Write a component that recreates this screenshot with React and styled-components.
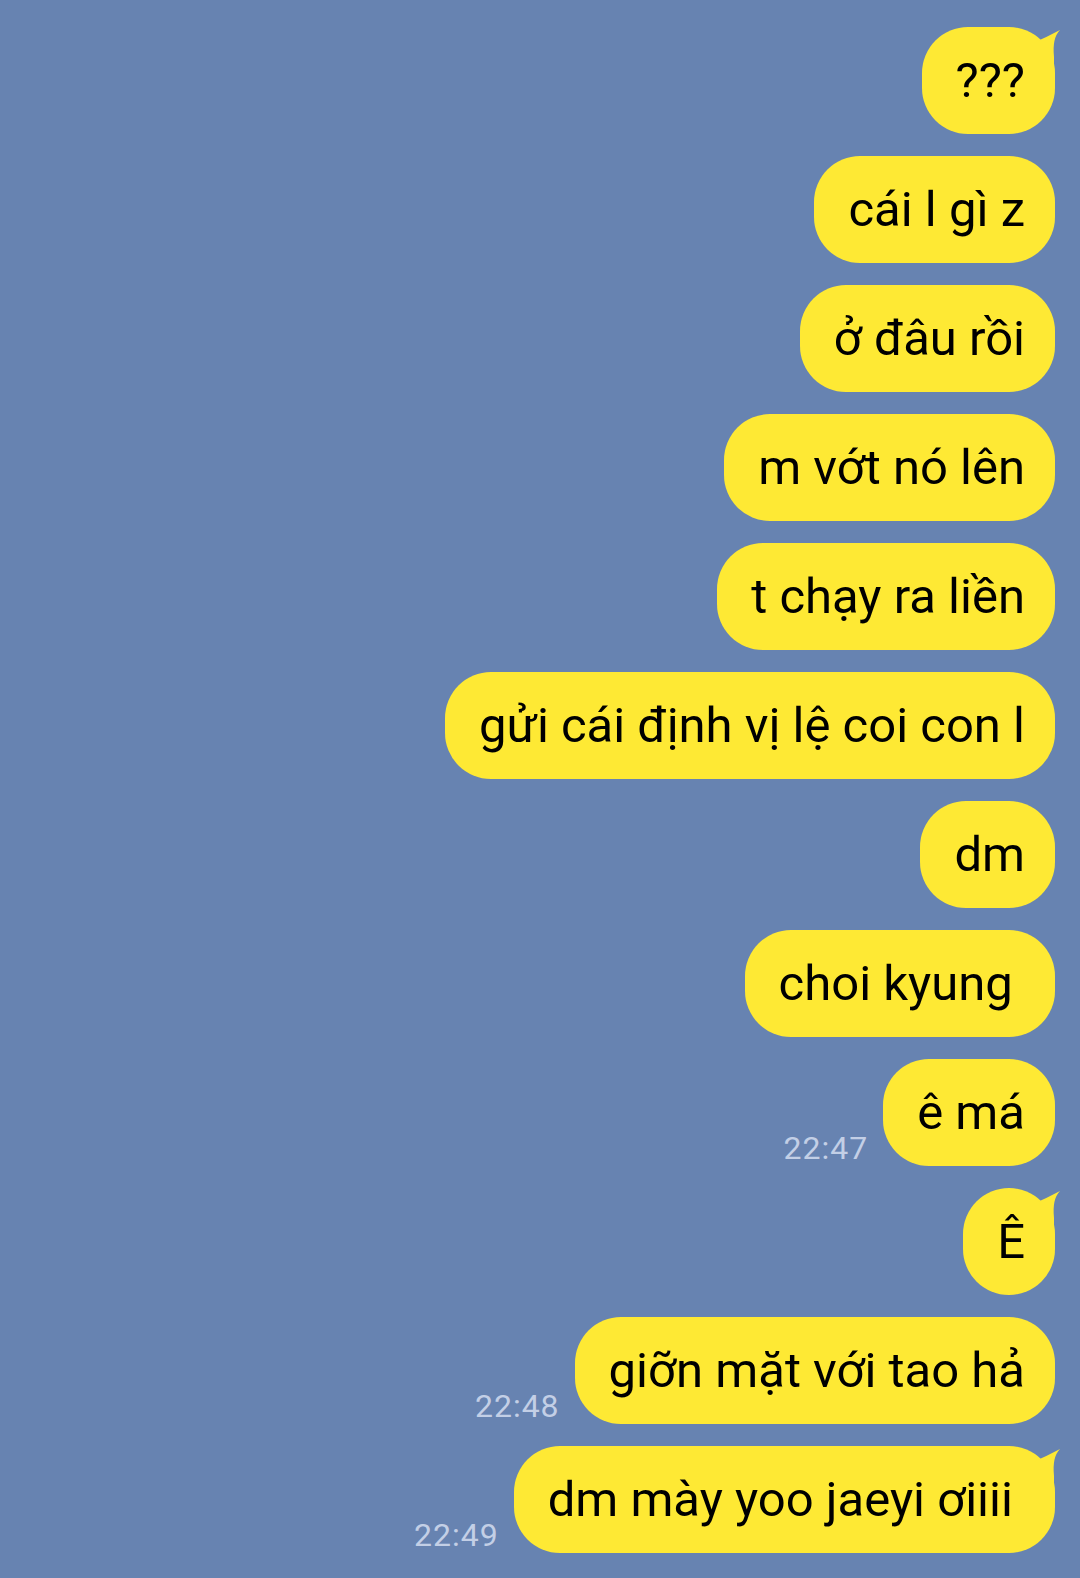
import React from "react";
import styled, { createGlobalStyle } from "styled-components";

const Global = createGlobalStyle`
  html, body { margin: 0; padding: 0; background: #6783b1; }
  body { font-family: Roboto, "Noto Sans", sans-serif; }
`;

const Screen = styled.div`
  width: 1080px;
  height: 1578px;
  background: #6783b1;
  box-sizing: border-box;
  padding: 27px 25px 0 0;
  display: flex;
  flex-direction: column;
  align-items: flex-end;
  gap: 22px;
  overflow: hidden;
`;

const Row = styled.div`
  display: flex;
  align-items: flex-end;
  gap: 15px;
`;

const Time = styled.span`
  font-family: Roboto, sans-serif;
  font-size: 32px;
  letter-spacing: 1px;
  color: #c3cfe6;
  line-height: 1;
  margin-bottom: 2px;
`;

const Bubble = styled.div`
  position: relative;
  background: #fee934;
  color: #000;
  height: 107px;
  border-radius: 46px;
  padding: 0 30px 0 34px;
  display: flex;
  align-items: center;
  font-family: Roboto, sans-serif;
  font-size: 49px;
  white-space: nowrap;
`;

const Tail = styled.svg`
  position: absolute;
  right: -6px;
  top: 0;
  width: 36px;
  height: 44px;
`;

const messages = [
  { text: "???", tail: true },
  { text: "cái l gì z" },
  { text: "ở đâu rồi" },
  { text: "m vớt nó lên" },
  { text: "t chạy ra liền" },
  { text: "gửi cái định vị lệ coi con l" },
  { text: "dm" },
  { text: "choi kyung\u00a0" },
  { text: "ê má", time: "22:47" },
  { text: "Ê", tail: true },
  { text: "giỡn mặt với tao hả", time: "22:48" },
  { text: "dm mày yoo jaeyi ơiiii\u00a0", time: "22:49", tail: true },
];

export default function App() {
  return (
    <>
      <Global />
      <Screen>
        {messages.map((m, i) => (
          <Row key={i}>
            {m.time && <Time>{m.time}</Time>}
            <Bubble>
              {m.tail && (
                <Tail viewBox="0 0 36 44">
                  <path d="M8 16 Q22 10 35 3 Q27 11 29 30 L29 44 L8 44 Z" fill="#fee934" />
                </Tail>
              )}
              {m.text}
            </Bubble>
          </Row>
        ))}
      </Screen>
    </>
  );
}
